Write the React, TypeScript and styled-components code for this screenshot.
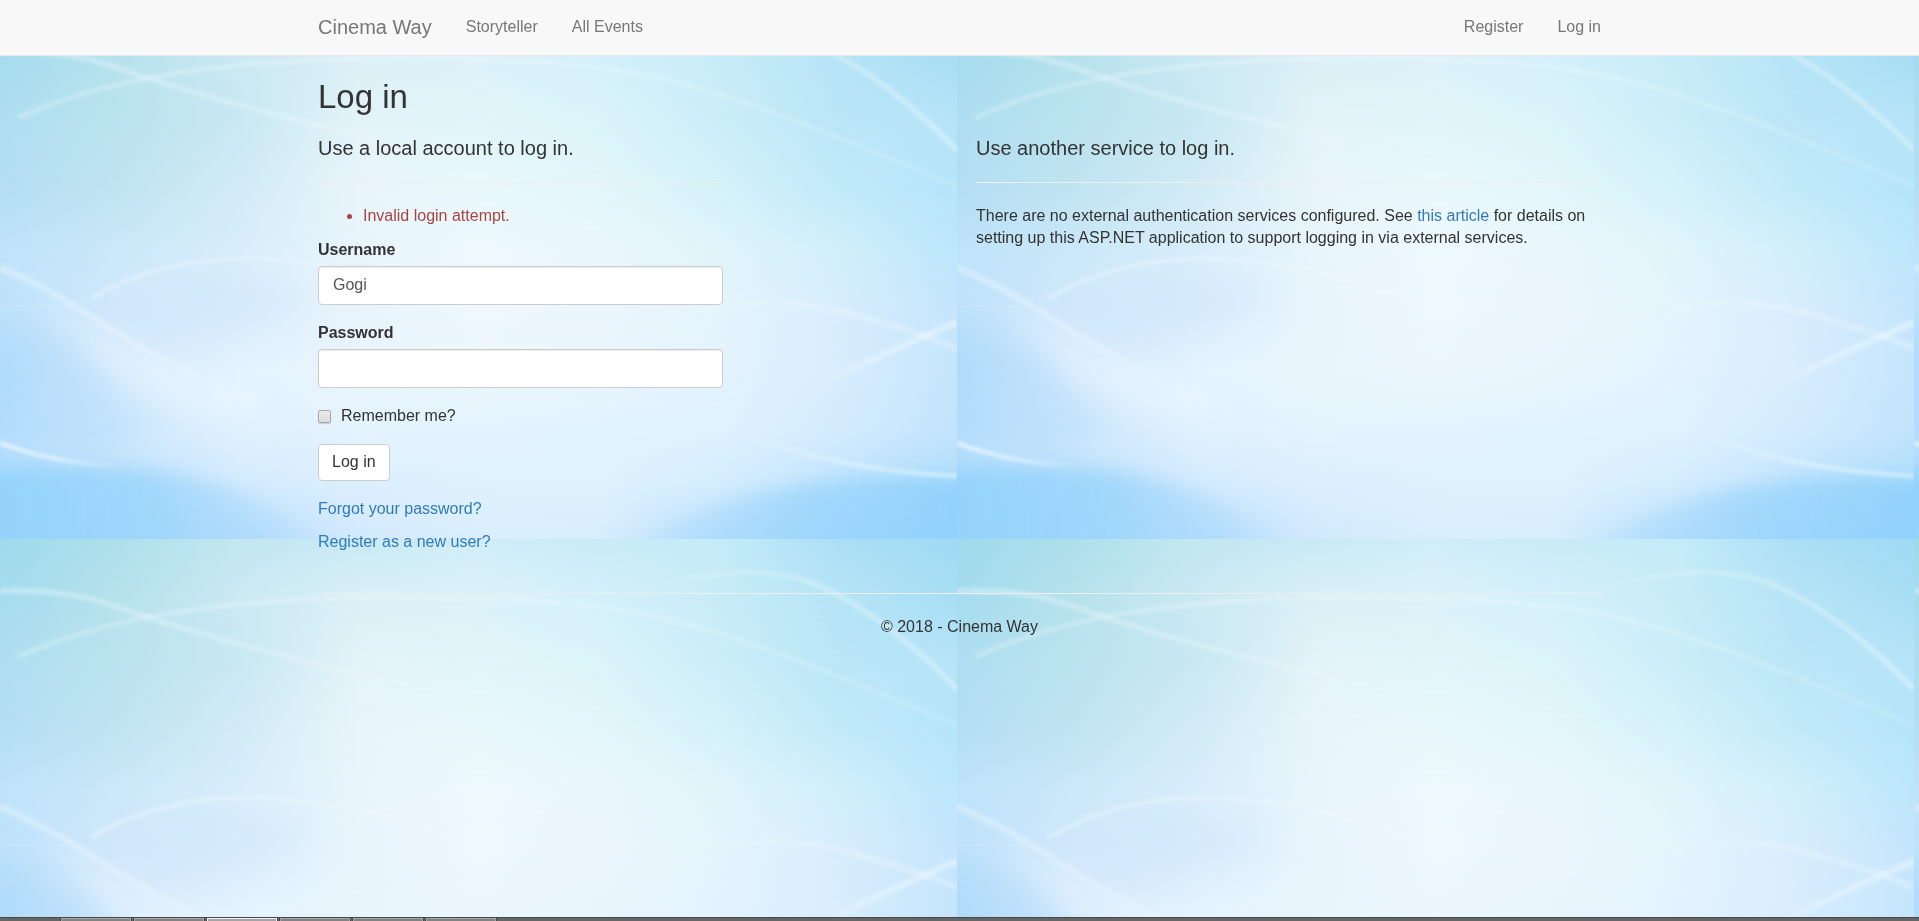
import React from "react";
import styled, { createGlobalStyle } from "styled-components";

const GlobalStyle = createGlobalStyle`
  *, *::before, *::after { box-sizing: border-box; }
  html, body, #root { height: 100%; }
  body {
    margin: 0;
    font-family: "Liberation Sans", Arial, Helvetica, sans-serif;
    font-size: 16px;
    line-height: 22px;
    color: #333;
    background: #dff1fb;
  }
`;

const TILE_W = 957;
const TILE_H = 539;

/* Colour rows of the wallpaper tile, top to bottom; stops are spread evenly from left to right. */
const meshRows: { y: number; colors: string[] }[] = [
  { y: 0, colors: ["#9fdaec", "#ade0eb", "#c2e7f1", "#c8eaf4", "#d0edf8", "#c8ebf6", "#c4ecf8", "#abdff6", "#9edaf4"] },
  { y: 60, colors: ["#a5dcee", "#b6e2ec", "#cbe9f2", "#daf0f6", "#dcf2f9", "#d4f0fa", "#c8ecf7", "#b6e4f6", "#a8def5"] },
  { y: 120, colors: ["#aedef0", "#bae3ee", "#c8e8f2", "#e3f3f8", "#e0f5f9", "#dbf4f9", "#cbeef8", "#bae6f7", "#b5e4f8"] },
  { y: 190, colors: ["#b4def3", "#c0e4f1", "#d2ebf6", "#e8f5fa", "#e9f8fb", "#e2f6fa", "#d5f2f9", "#c2eaf9", "#b5e5fa"] },
  { y: 250, colors: ["#bfe3f9", "#cbe8f9", "#d8edfa", "#e8f5fb", "#edf9fd", "#eaf7fc", "#e0f4fa", "#d1effa", "#bce7fb"] },
  { y: 310, colors: ["#bde2fb", "#d2e8fb", "#d9edfb", "#e8f4fc", "#eef8fe", "#ebf6fc", "#e4f4fc", "#d8edfc", "#c5e5fc"] },
  { y: 370, colors: ["#b3dcfb", "#d4e9fc", "#e4f3fd", "#e8f5fc", "#ecf7fd", "#e9f5fd", "#e3f3fd", "#d8edfd", "#c5e5fc"] },
  { y: 430, colors: ["#b5ddfc", "#cde7fc", "#e0f1fd", "#e4f3fc", "#e3f3fd", "#e1f3fd", "#dff2fd", "#d4ebfd", "#c1e4fc"] },
  { y: 480, colors: ["#b4defd", "#c2e3fd", "#d4ebfd", "#dceffd", "#dff1fc", "#dff2fc", "#d6edfd", "#c2e5fd", "#b0defc"] },
  { y: 539, colors: ["#a2d5fb", "#a6d7fc", "#b5ddfc", "#d2e9fd", "#d9eefc", "#d8edfd", "#b6dffc", "#9fd6fc", "#92d1fb"] },
];

const lightTrails: { d: string; width: number; opacity: number; from: number; to: number }[] = [
  { d: "M0 52 C60 50 90 58 130 72 S230 104 330 128 S430 150 480 158", width: 6, opacity: 0.34, from: 0, to: 480 },
  { d: "M18 118 C110 76 220 64 320 60 S560 58 650 76 S860 146 957 186", width: 5, opacity: 0.28, from: 0, to: 1300 },
  { d: "M600 64 C680 34 760 24 812 44 S920 112 957 150", width: 6, opacity: 0.42, from: 1150, to: 590 },
  { d: "M92 298 C150 264 210 257 260 259 S400 270 490 318", width: 5, opacity: 0.34, from: 40, to: 520 },
  { d: "M0 267 C40 286 60 296 90 316 S180 372 250 398", width: 7, opacity: 0.4, from: -100, to: 260 },
  { d: "M640 330 C730 298 790 298 840 311 S930 336 957 349", width: 7, opacity: 0.32, from: 1150, to: 640 },
  { d: "M957 322 C920 338 860 364 810 390", width: 7, opacity: 0.5, from: 1000, to: 800 },
  { d: "M0 443 C35 456 70 464 125 466", width: 5, opacity: 0.7, from: -40, to: 125 },
  { d: "M740 432 C810 460 880 472 957 476", width: 5, opacity: 0.5, from: 1000, to: 730 },
];

const Backdrop = styled.svg`
  position: fixed;
  inset: 0;
  z-index: -1;
  width: 100%;
  height: 100%;
`;

function Wallpaper() {
  return (
    <Backdrop aria-hidden="true">
      <defs>
        {meshRows.map((row, i) => (
          <React.Fragment key={row.y}>
            <linearGradient id={`row${i}`} x1="0" x2="1" y1="0" y2="0">
              {row.colors.map((color, n) => (
                <stop key={n} offset={n / (row.colors.length - 1)} stopColor={color} />
              ))}
            </linearGradient>
            {i > 0 && (
              <>
                <linearGradient id={`fade${i}`} gradientUnits="userSpaceOnUse" x1="0" x2="0" y1={meshRows[i - 1].y} y2={row.y}>
                  <stop offset="0" stopColor="#fff" stopOpacity="0" />
                  <stop offset="1" stopColor="#fff" />
                </linearGradient>
                <mask id={`mask${i}`} maskUnits="userSpaceOnUse" x="0" y="0" width={TILE_W} height={TILE_H}>
                  <rect width={TILE_W} height={TILE_H} fill={`url(#fade${i})`} />
                </mask>
              </>
            )}
          </React.Fragment>
        ))}
        {lightTrails.map((trail, i) => (
          <linearGradient key={i} id={`trail${i}`} gradientUnits="userSpaceOnUse" x1={trail.from} x2={trail.to} y1="0" y2="0">
            <stop offset="0" stopColor="#f4fbff" stopOpacity={trail.opacity} />
            <stop offset="0.6" stopColor="#f4fbff" stopOpacity={trail.opacity * 0.7} />
            <stop offset="1" stopColor="#f4fbff" stopOpacity="0" />
          </linearGradient>
        ))}
        <linearGradient id="deepLeft" x1="0" x2="1" y1="0" y2="0">
          <stop offset="0" stopColor="#92d2fb" />
          <stop offset="0.5" stopColor="#9dd6fb" stopOpacity="0.9" />
          <stop offset="1" stopColor="#b9defc" stopOpacity="0.3" />
        </linearGradient>
        <linearGradient id="deepRight" x1="1" x2="0" y1="0" y2="0">
          <stop offset="0" stopColor="#8ed1fb" />
          <stop offset="0.5" stopColor="#9dd6fc" stopOpacity="0.8" />
          <stop offset="1" stopColor="#b9defc" stopOpacity="0.3" />
        </linearGradient>
        <filter id="soft" x="-20%" y="-60%" width="140%" height="220%" colorInterpolationFilters="sRGB">
          <feGaussianBlur stdDeviation="10" />
        </filter>
        <filter id="fine" x="-10%" y="-40%" width="120%" height="180%" colorInterpolationFilters="sRGB">
          <feGaussianBlur stdDeviation="1.5" />
        </filter>
        <pattern id="tile" patternUnits="userSpaceOnUse" width={TILE_W} height={TILE_H}>
          {meshRows.map((row, i) => (
            <rect key={row.y} width={TILE_W} height={TILE_H} fill={`url(#row${i})`} mask={i > 0 ? `url(#mask${i})` : undefined} />
          ))}
          <g filter="url(#soft)">
            <path d="M-40 320 L20 324 C60 350 120 390 150 430 L100 450 L-40 430Z" fill="#a9d7fb" opacity="0.25" />
            <path d="M110 312 C150 275 250 262 310 290 C280 330 220 350 160 350Z" fill="#c9e2fa" opacity="0.2" />
            <path d="M40 300 C100 330 200 380 270 400 C200 440 150 400 110 370Z" fill="#f2faff" opacity="0.35" />
            <path d="M-40 470 C60 464 150 466 200 480 S300 520 340 570 L-40 570Z" fill="url(#deepLeft)" />
            <path d="M600 570 C660 530 730 496 800 486 S910 478 1000 480 L1000 570Z" fill="url(#deepRight)" />
          </g>
          <g fill="none" filter="url(#fine)">
            {lightTrails.map((trail, i) => (
              <path key={i} d={trail.d} stroke={`url(#trail${i})`} strokeWidth={trail.width} />
            ))}
          </g>
          <path d="M0 306 H70" stroke="#eef8ff" strokeOpacity="0.3" />
        </pattern>
      </defs>
      <rect width="100%" height="100%" fill="url(#tile)" />
    </Backdrop>
  );
}

const Page = styled.div`
  display: flex;
  flex-direction: column;
  min-height: 100%;
`;

const Container = styled.div`
  width: 100%;
  max-width: 1317px;
  margin: 0 auto;
  padding: 0 17px;
`;

const Navbar = styled.header`
  background: #f8f8f8;
  border-bottom: 1px solid #e7e7e7;
`;

const NavRow = styled(Container)`
  display: flex;
  align-items: center;
  height: 55px;
  padding-bottom: 2px;
`;

const NavGroup = styled.nav<{ $end?: boolean }>`
  display: flex;
  align-items: center;
  gap: 34px;
  margin-left: ${(p) => (p.$end ? "auto" : "0")};
`;

const NavLink = styled.a<{ $brand?: boolean }>`
  color: #777;
  font-size: ${(p) => (p.$brand ? "20px" : "16px")};
  text-decoration: none;
`;

const Main = styled.main`
  flex: 1;
`;

const Title = styled.h2`
  margin: 23px 0 22px;
  font-size: 33px;
  line-height: 36px;
  font-weight: 400;
`;

const Columns = styled.div`
  display: grid;
  grid-template-columns: 1fr 1fr;
  gap: 33px;

  @media (max-width: 900px) {
    grid-template-columns: 1fr;
  }
`;

const Panel = styled.section<{ $narrow?: boolean }>`
  max-width: ${(p) => (p.$narrow ? "405px" : "none")};
`;

const Subtitle = styled.h4`
  margin: 0;
  font-size: 20px;
  line-height: 22px;
  font-weight: 400;
`;

const Divider = styled.hr`
  margin: 23px 0 22px;
  border: 0;
  border-top: 1px solid #eee;
`;

const ErrorList = styled.ul`
  margin: 0 0 12px;
  padding-left: 45px;
  color: #a94442;
`;

const Field = styled.div`
  margin-bottom: 17px;
`;

const FieldLabel = styled.label`
  display: block;
  margin-bottom: 5px;
  font-weight: 700;
`;

const TextInput = styled.input`
  display: block;
  width: 100%;
  height: 39px;
  padding: 6px 14px 8px;
  border: 1px solid #ccc;
  border-radius: 4px;
  background: #fff;
  box-shadow: inset 0 1px 1px rgba(0, 0, 0, 0.075);
  color: #555;
  font: inherit;
`;

const CheckLabel = styled.label`
  display: flex;
  align-items: center;
  gap: 10px;
`;

const Checkbox = styled.input`
  appearance: none;
  width: 13px;
  height: 13px;
  margin: 0;
  border: 1px solid #a9a9a9;
  border-radius: 2px;
  background: linear-gradient(#ececec, #dcdcdc);
  box-shadow: 0 1px 1px rgba(0, 0, 0, 0.15);

  &:checked {
    background: #3b78c3;
  }
`;

const SubmitButton = styled.button`
  display: block;
  height: 37px;
  padding: 0 13px 2px;
  border: 1px solid #ccc;
  border-radius: 4px;
  background: #fff;
  color: #333;
  font: inherit;
  cursor: pointer;
`;

const Paragraph = styled.p`
  margin: 0 0 11px;
`;

const TextLink = styled.a`
  color: #337ab7;
  text-decoration: none;
`;

const Footer = styled.footer`
  padding-top: 6px;
  text-align: center;
`;

const Taskbar = styled.div`
  display: flex;
  gap: 3px;
  height: 4px;
  padding-left: 61px;
  overflow: hidden;
  border-top: 1px solid #484848;
  background: #666;
`;

const TaskbarItem = styled.span<{ $active?: boolean }>`
  width: 70px;
  height: 8px;
  border: 1px solid ${(p) => (p.$active ? "#f4f4f4" : "#a8a8a8")};
  outline: 1px solid #484848;
  background: ${(p) => (p.$active ? "#a4a4a4" : "#838383")};
`;

const taskbarItems = [false, false, true, false, false, false];

export default function App() {
  return (
    <>
      <GlobalStyle />
      <Wallpaper />
      <Page>
        <Navbar>
          <NavRow>
            <NavGroup>
              <NavLink href="#" $brand>Cinema Way</NavLink>
              <NavLink href="#">Storyteller</NavLink>
              <NavLink href="#">All Events</NavLink>
            </NavGroup>
            <NavGroup $end>
              <NavLink href="#">Register</NavLink>
              <NavLink href="#">Log in</NavLink>
            </NavGroup>
          </NavRow>
        </Navbar>
        <Main>
          <Container>
            <Title>Log in</Title>
            <Columns>
              <Panel $narrow>
                <form onSubmit={(e) => e.preventDefault()}>
                  <Subtitle>Use a local account to log in.</Subtitle>
                  <Divider />
                  <ErrorList>
                    <li>Invalid login attempt.</li>
                  </ErrorList>
                  <Field>
                    <FieldLabel htmlFor="username">Username</FieldLabel>
                    <TextInput id="username" type="text" defaultValue="Gogi" />
                  </Field>
                  <Field>
                    <FieldLabel htmlFor="password">Password</FieldLabel>
                    <TextInput id="password" type="password" />
                  </Field>
                  <Field>
                    <CheckLabel htmlFor="remember">
                      <Checkbox id="remember" type="checkbox" />
                      Remember me?
                    </CheckLabel>
                  </Field>
                  <Field>
                    <SubmitButton type="submit">Log in</SubmitButton>
                  </Field>
                  <Paragraph>
                    <TextLink href="#">Forgot your password?</TextLink>
                  </Paragraph>
                  <Paragraph>
                    <TextLink href="#">Register as a new user?</TextLink>
                  </Paragraph>
                </form>
              </Panel>
              <Panel>
                <Subtitle>Use another service to log in.</Subtitle>
                <Divider />
                <Paragraph>
                  There are no external authentication services configured. See{" "}
                  <TextLink href="#">this article</TextLink> for details on setting up this ASP.NET application to
                  support logging in via external services.
                </Paragraph>
              </Panel>
            </Columns>
            <Footer>
              <Divider />
              <Paragraph>© 2018 - Cinema Way</Paragraph>
            </Footer>
          </Container>
        </Main>
        <Taskbar>
          {taskbarItems.map((active, i) => (
            <TaskbarItem key={i} $active={active} />
          ))}
        </Taskbar>
      </Page>
    </>
  );
}
